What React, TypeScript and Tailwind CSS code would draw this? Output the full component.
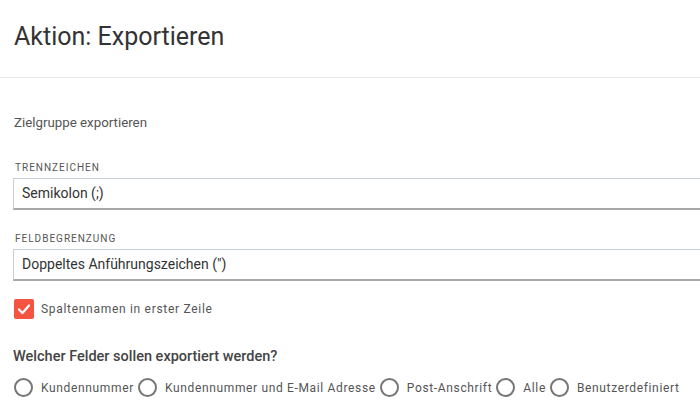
import React from "react";

const Radio = ({ label }: { label: string }) => (
  <label className="flex items-center whitespace-nowrap shrink-0">
    <span className="w-[19px] h-[19px] rounded-full border-2 border-[#767676] bg-white shrink-0" />
    <span className="ml-[8px] mr-[4px] text-[12px] tracking-[0.65px] text-[#555]">{label}</span>
  </label>
);

export default function App() {
  return (
    <div className="w-[700px] h-[413px] overflow-hidden bg-white text-[#333]" style={{ fontFamily: "Roboto, 'Liberation Sans', sans-serif" }}>
      <div className="h-[78px] border-b border-[#e6e6e6] flex items-center pl-[14px] pb-[4px]">
        <h1 className="text-[25px] text-[#333] leading-none">Aktion: Exportieren</h1>
      </div>
      <div className="pl-[13px]">
        <div className="mt-[36px] h-[18px] flex items-center pl-[1px] text-[13.3px] text-[#555]">Zielgruppe exportieren</div>
        <div className="mt-[28px] h-[14px] flex items-center pl-[2px] text-[10px] tracking-[1px] text-[#555]">TRENNZEICHEN</div>
        <div className="mt-[4px] w-[720px] h-[32px] border border-[#c9d0d5] border-b-2 border-b-[#a8a8a8] flex items-center pl-[8px] text-[14px] text-[#333]">Semikolon (;)</div>
        <div className="mt-[21px] h-[14px] flex items-center pl-[2px] text-[10px] tracking-[1px] text-[#555]">FELDBEGRENZUNG</div>
        <div className="mt-[4px] w-[720px] h-[32px] border border-[#c9d0d5] border-b-2 border-b-[#a8a8a8] flex items-center pl-[8px] text-[14px] text-[#333]">Doppeltes Anführungszeichen (")</div>
        <div className="mt-[18px] h-[20px] flex items-center pl-[1px]">
          <span className="w-[20px] h-[20px] rounded-[2px] bg-[#f35540] flex items-center justify-center">
            <svg width="14" height="14" viewBox="0 0 14 14" fill="none">
              <path d="M2 7.5 L5.5 11 L12 3.5" stroke="white" strokeWidth="2.2" strokeLinecap="round" strokeLinejoin="round" />
            </svg>
          </span>
          <span className="ml-[7px] text-[12px] tracking-[0.7px] text-[#555]">Spaltennamen in erster Zeile</span>
        </div>
        <div className="mt-[29px] h-[18px] flex items-center text-[14.5px] font-medium text-[#444]">Welcher Felder sollen exportiert werden?</div>
        <div className="mt-[12px] h-[19px] flex items-center pl-[1px]">
          <Radio label="Kundennummer" />
          <Radio label="Kundennummer und E-Mail Adresse" />
          <Radio label="Post-Anschrift" />
          <Radio label="Alle" />
          <Radio label="Benutzerdefiniert" />
        </div>
      </div>
    </div>
  );
}
